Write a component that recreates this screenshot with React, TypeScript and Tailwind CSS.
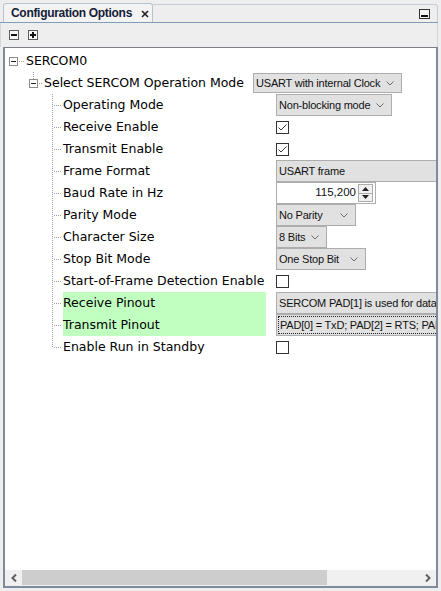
import React from "react";

function Chevron() {
  return (
    <svg width="8" height="5" viewBox="0 0 8 5" className="shrink-0">
      <polyline points="0.5,0.5 4,4 7.5,0.5" fill="none" stroke="#6d6d6d" strokeWidth="1" />
    </svg>
  );
}

function Dropdown({ text, width, tall = true }: { text: string; width: string; tall?: boolean }) {
  return (
    <div
      className={`${width} ${tall ? "h-[22px]" : "h-[20px]"} flex items-center justify-between border border-[#adadad] bg-[#e1e1e1] pl-[2px] pr-[7px] font-['Liberation_Sans',Arial,sans-serif] text-[11px] tracking-[-0.2px] text-[#111] whitespace-nowrap`}
    >
      <span>{text}</span>
      <Chevron />
    </div>
  );
}

function Field({ text, focused }: { text: string; focused?: boolean }) {
  return (
    <div className="w-[180px] h-[22px] border border-[#adadad] bg-[#e1e1e1] p-px">
      <div
        className={`h-full flex items-center pl-[1px] font-['Liberation_Sans',Arial,sans-serif] text-[11px] tracking-[-0.2px] text-[#111] whitespace-nowrap ${
          focused ? "border border-dotted border-[#222]" : ""
        }`}
      >
        {text}
      </div>
    </div>
  );
}

function Check({ checked }: { checked?: boolean }) {
  return (
    <div className="w-[13px] h-[13px] border border-[#333] bg-white">
      {checked && (
        <svg width="11" height="11" viewBox="0 0 11 11">
          <polyline points="1.5,5.5 4,8 9.5,2.5" fill="none" stroke="#3a3a3a" strokeWidth="1" />
        </svg>
      )}
    </div>
  );
}

function Spinner({ value }: { value: string }) {
  return (
    <div className="w-[100px] h-[22px] border border-[#adadad] bg-white flex items-center justify-end pr-[2px] gap-[2px]">
      <span className="font-['Liberation_Sans',Arial,sans-serif] text-[11.5px] text-[#111]">{value}</span>
      <div className="flex flex-col w-[15px] h-[18px]">
        <div className="flex-1 flex items-center justify-center border border-[#acacac] bg-[#f0f0f0]">
          <svg width="7" height="4" viewBox="0 0 7 4">
            <polygon points="0,4 3.5,0 7,4" fill="#222" />
          </svg>
        </div>
        <div className="flex-1 flex items-center justify-center border border-t-0 border-[#acacac] bg-[#f0f0f0]">
          <svg width="7" height="4" viewBox="0 0 7 4">
            <polygon points="0,0 3.5,4 7,0" fill="#222" />
          </svg>
        </div>
      </div>
    </div>
  );
}

function ExpandBox({ lineUp, dotsWidth }: { lineUp?: boolean; dotsWidth: number }) {
  const w = 9 + dotsWidth;
  return (
    <svg width={w} height="22" viewBox={`0 0 ${w} 22`} className="shrink-0">
      {lineUp && <line x1="4.5" y1="0" x2="4.5" y2="7" stroke="#a0a0a0" strokeDasharray="1 1" />}
      <rect x="0.5" y="7.5" width="8" height="8" fill="#fff" stroke="#8c8c8c" />
      <line x1="2" y1="11.5" x2="7" y2="11.5" stroke="#222" />
      <line x1="10" y1="11.5" x2={w - 1} y2="11.5" stroke="#a0a0a0" strokeDasharray="1 1" />
    </svg>
  );
}

function Connector({ last }: { last?: boolean }) {
  return (
    <svg width="11" height="22" viewBox="0 0 11 22" className="shrink-0">
      <line x1="0.5" y1="0" x2="0.5" y2={last ? 12 : 22} stroke="#a0a0a0" strokeDasharray="1 1" />
      <line x1="2" y1="11.5" x2="10" y2="11.5" stroke="#a0a0a0" strokeDasharray="1 1" />
    </svg>
  );
}

type Child = { label: string; editor: React.ReactNode; green?: boolean };

const children: Child[] = [
  { label: "Operating Mode", editor: <Dropdown text="Non-blocking mode" width="w-[116px]" /> },
  { label: "Receive Enable", editor: <Check checked /> },
  { label: "Transmit Enable", editor: <Check checked /> },
  { label: "Frame Format", editor: <Field text="USART frame" /> },
  { label: "Baud Rate in Hz", editor: <Spinner value="115,200" /> },
  { label: "Parity Mode", editor: <Dropdown text="No Parity" width="w-[80px]" /> },
  { label: "Character Size", editor: <Dropdown text="8 Bits" width="w-[51px]" /> },
  { label: "Stop Bit Mode", editor: <Dropdown text="One Stop Bit" width="w-[90px]" /> },
  { label: "Start-of-Frame Detection Enable", editor: <Check /> },
  { label: "Receive Pinout", editor: <Field text="SERCOM PAD[1] is used for data reception" />, green: true },
  { label: "Transmit Pinout", editor: <Field text="PAD[0] = TxD; PAD[2] = RTS; PAD[3] = CTS" focused />, green: true },
  { label: "Enable Run in Standby", editor: <Check /> },
];

export default function App() {
  return (
    <div className="w-[441px] h-[591px] bg-[#eeeeee] overflow-hidden select-none">
      <div className="w-[438px] pt-[3px]">
        {/* Header with tab */}
        <div className="flex h-[20px] border-b border-[#7f9db9]">
          <div className="ml-[3px] w-[150px] h-[19px] flex items-center rounded-t-[3px] border border-b-0 border-[#b9c3ce] bg-[#f3f3f3] pl-[7px]">
            <span className="font-['Liberation_Sans',Arial,sans-serif] text-[12px] font-bold tracking-[-0.3px] text-[#142038]">
              Configuration Options
            </span>
            <svg width="8" height="8" viewBox="0 0 8 8" className="ml-[9px] mt-[1px]">
              <line x1="1" y1="1" x2="7" y2="7" stroke="#222" strokeWidth="1.6" />
              <line x1="7" y1="1" x2="1" y2="7" stroke="#222" strokeWidth="1.6" />
            </svg>
          </div>
          <div className="flex-1 flex items-center justify-end pr-[7px] mt-[1px] border-t border-r border-[#c6ccd3] rounded-tr-[3px]">
            <div className="w-[11px] h-[10px] border border-[#333] bg-[#f6f6f6] flex items-end justify-center pb-[1px]">
              <div className="w-[7px] h-[2px] bg-[#111]" />
            </div>
          </div>
        </div>

        {/* Toolbar */}
        <div className="h-[24px] flex items-center gap-[9px] pl-[8px] border-l border-r border-[#d4d8dd]">
          {["minus", "plus"].map((k) => (
            <div key={k} className="w-[10px] h-[10px] border border-[#5c5c5c] bg-[#f8f8f8] relative">
              <div className="absolute left-[1px] top-[3px] w-[6px] h-[2px] bg-[#111]" />
              {k === "plus" && <div className="absolute left-[3px] top-[1px] w-[2px] h-[6px] bg-[#111]" />}
            </div>
          ))}
        </div>

        {/* Tree panel */}
        <div className="ml-[3px] w-[435px] h-[541px] flex flex-col border-2 border-t border-[#7e8b9b] border-t-[#7a7f86] bg-white">
          <div className="flex-1 overflow-hidden pt-[2px] font-['DejaVu_Sans',Verdana,sans-serif] text-[12.5px] text-black whitespace-nowrap">
            {/* SERCOM0 */}
            <div className="flex h-[22px] items-center pl-[4px]">
              <ExpandBox dotsWidth={8} />
              <span>SERCOM0</span>
            </div>
            {/* Select mode */}
            <div className="flex h-[22px] items-center pl-[24px]">
              <ExpandBox lineUp dotsWidth={6} />
              <span>Select SERCOM Operation Mode</span>
              <div className="ml-[9px]">
                <Dropdown text="USART with internal Clock" width="w-[149px]" tall={false} />
              </div>
            </div>
            {children.map((c, i) => (
              <div key={c.label} className="flex h-[22px] items-center pl-[47px]">
                <Connector last={i === children.length - 1} />
                <div className={`w-[203px] h-full flex items-center shrink-0 ${c.green ? "bg-[#c0ffc0]" : ""}`}>
                  {c.label}
                </div>
                <div className="ml-[10px] shrink-0">{c.editor}</div>
              </div>
            ))}
          </div>

          {/* Horizontal scrollbar */}
          <div className="h-[16px] flex bg-[#f0f0f0]">
            <div className="w-[17px] flex items-center justify-center">
              <svg width="6" height="8" viewBox="0 0 6 8">
                <polyline points="5,0.5 1.5,4 5,7.5" fill="none" stroke="#606060" strokeWidth="2" />
              </svg>
            </div>
            <div className="w-[305px] h-[15px] bg-[#cdcdcd]" />
            <div className="flex-1" />
            <div className="w-[17px] flex items-center justify-center">
              <svg width="6" height="8" viewBox="0 0 6 8">
                <polyline points="1,0.5 4.5,4 1,7.5" fill="none" stroke="#606060" strokeWidth="2" />
              </svg>
            </div>
          </div>
        </div>
      </div>
    </div>
  );
}
